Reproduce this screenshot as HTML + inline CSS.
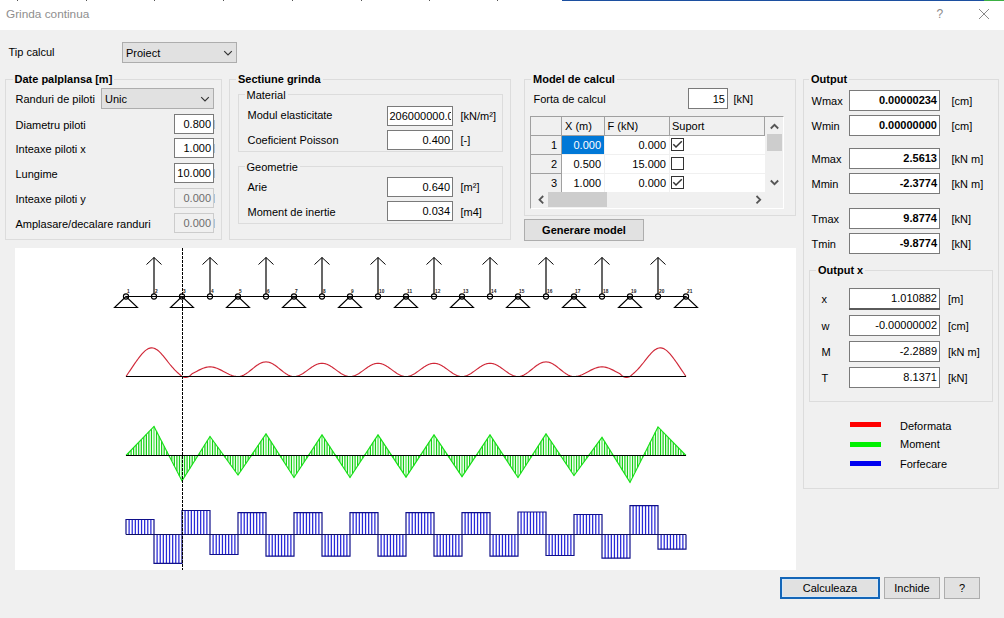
<!DOCTYPE html>
<html><head><meta charset="utf-8"><style>
html,body{margin:0;padding:0}
body{width:1004px;height:618px;position:relative;overflow:hidden;background:#f0f0f0;font-family:"Liberation Sans",sans-serif;font-size:11px;color:#000}
.t{position:absolute;white-space:nowrap;line-height:13px}
</style></head><body>
<div style="position:absolute;left:0px;top:0px;width:1004px;height:30px;box-sizing:border-box;background:#fff;"></div><div style="position:absolute;left:562px;top:0px;width:422px;height:1px;box-sizing:border-box;background:#1c4fa0;"></div><div style="position:absolute;left:17px;top:0px;width:1px;height:1px;box-sizing:border-box;background:#555;"></div><div style="position:absolute;left:86px;top:0px;width:1px;height:1px;box-sizing:border-box;background:#555;"></div><div style="position:absolute;left:154px;top:0px;width:1px;height:1px;box-sizing:border-box;background:#555;"></div><div style="position:absolute;left:223px;top:0px;width:1px;height:1px;box-sizing:border-box;background:#555;"></div><div style="position:absolute;left:292px;top:0px;width:1px;height:1px;box-sizing:border-box;background:#555;"></div><div style="position:absolute;left:361px;top:0px;width:1px;height:1px;box-sizing:border-box;background:#555;"></div><div style="position:absolute;left:429px;top:0px;width:1px;height:1px;box-sizing:border-box;background:#555;"></div><div style="position:absolute;left:497px;top:0px;width:1px;height:1px;box-sizing:border-box;background:#555;"></div><div style="position:absolute;left:984px;top:0px;width:20px;height:1px;box-sizing:border-box;background:#3cb043;"></div><div class="t" style="left:6px;top:8.27px;font-size:11.8px;color:#8e8e8e;">Grinda continua</div><div class="t" style="left:936.5px;top:8.09px;font-size:12px;color:#8a8a8a;">?</div><svg style="position:absolute;left:978px;top:8px" width="12" height="12"><path d="M1 1 L11 11 M11 1 L1 11" stroke="#8a8a8a" stroke-width="1" fill="none"/></svg><div class="t" style="left:8.5px;top:46.00px;font-size:11px;">Tip calcul</div><div style="position:absolute;left:122px;top:42px;width:115px;height:21px;box-sizing:border-box;border:1px solid #adadad;background:#e1e1e1;"></div><div class="t" style="left:126px;top:47.00px;font-size:11px;">Proiect</div><svg style="position:absolute;left:222px;top:48px" width="12" height="10"><path d="M2.2 3.2 L6 7 L9.8 3.2" fill="none" stroke="#333" stroke-width="1.15"/></svg><div style="position:absolute;left:5px;top:79px;width:217px;height:161px;box-sizing:border-box;border:1px solid #dcdcdc;"></div><div class="t" style="left:12.5px;top:73.00px;padding:0 2px;background:#f0f0f0;font-weight:bold;">Date palplansa [m]</div><div class="t" style="left:15.5px;top:93.00px;font-size:11px;">Randuri de piloti</div><div style="position:absolute;left:101px;top:88px;width:113px;height:21px;box-sizing:border-box;border:1px solid #adadad;background:#e1e1e1;"></div><div class="t" style="left:105px;top:93.00px;font-size:11px;">Unic</div><svg style="position:absolute;left:199px;top:94px" width="12" height="10"><path d="M2.2 3.2 L6 7 L9.8 3.2" fill="none" stroke="#333" stroke-width="1.15"/></svg><div class="t" style="left:15.5px;top:119.00px;font-size:11px;">Diametru piloti</div><div style="position:absolute;left:174px;top:114px;width:40px;height:20px;box-sizing:border-box;border:1px solid #7a7a7a;background:#fff;"></div><div class="t" style="right:793px;top:118.00px;font-size:11px;text-align:right;color:#000;">0.800</div><div style="position:absolute;left:214px;top:120px;width:1px;height:9px;box-sizing:border-box;background:#a8c4dc;"></div><div class="t" style="left:15.5px;top:143.00px;font-size:11px;">Inteaxe piloti x</div><div style="position:absolute;left:174px;top:138px;width:40px;height:20px;box-sizing:border-box;border:1px solid #7a7a7a;background:#fff;"></div><div class="t" style="right:793px;top:142.00px;font-size:11px;text-align:right;color:#000;">1.000</div><div style="position:absolute;left:214px;top:144px;width:1px;height:9px;box-sizing:border-box;background:#a8c4dc;"></div><div class="t" style="left:15.5px;top:168.00px;font-size:11px;">Lungime</div><div style="position:absolute;left:174px;top:163px;width:40px;height:20px;box-sizing:border-box;border:1px solid #7a7a7a;background:#fff;"></div><div class="t" style="right:793px;top:167.00px;font-size:11px;text-align:right;color:#000;">10.000</div><div style="position:absolute;left:214px;top:169px;width:1px;height:9px;box-sizing:border-box;background:#a8c4dc;"></div><div class="t" style="left:15.5px;top:193.00px;font-size:11px;">Inteaxe piloti y</div><div style="position:absolute;left:174px;top:188px;width:40px;height:20px;box-sizing:border-box;border:1px solid #cccccc;background:#f0f0f0;"></div><div class="t" style="right:793px;top:192.00px;font-size:11px;text-align:right;color:#6d6d6d;">0.000</div><div style="position:absolute;left:214px;top:194px;width:1px;height:9px;box-sizing:border-box;background:#a8c4dc;"></div><div class="t" style="left:15.5px;top:218.00px;font-size:11px;">Amplasare/decalare randuri</div><div style="position:absolute;left:174px;top:213px;width:40px;height:20px;box-sizing:border-box;border:1px solid #cccccc;background:#f0f0f0;"></div><div class="t" style="right:793px;top:217.00px;font-size:11px;text-align:right;color:#6d6d6d;">0.000</div><div style="position:absolute;left:214px;top:219px;width:1px;height:9px;box-sizing:border-box;background:#a8c4dc;"></div><div style="position:absolute;left:229px;top:79px;width:282px;height:161px;box-sizing:border-box;border:1px solid #dcdcdc;"></div><div class="t" style="left:236px;top:73.00px;padding:0 2px;background:#f0f0f0;font-weight:bold;">Sectiune grinda</div><div style="position:absolute;left:238px;top:94px;width:265px;height:58px;box-sizing:border-box;border:1px solid #dcdcdc;"></div><div class="t" style="left:244.5px;top:89.00px;padding:0 2px;background:#f0f0f0;">Material</div><div class="t" style="left:247.5px;top:109.00px;font-size:11px;">Modul elasticitate</div><div style="position:absolute;left:387px;top:106px;width:66px;height:20px;box-sizing:border-box;border:1px solid #7a7a7a;background:#fff;"></div><div style="position:absolute;left:388px;top:107px;width:63px;height:18px;overflow:hidden"><div class="t" style="left:1.5px;top:3px">206000000.0</div></div><div class="t" style="left:460.5px;top:110.00px;font-size:11px;">[kN/m&sup2;]</div><div class="t" style="left:247.5px;top:134.00px;font-size:11px;">Coeficient Poisson</div><div style="position:absolute;left:387px;top:130px;width:66px;height:20px;box-sizing:border-box;border:1px solid #7a7a7a;background:#fff;"></div><div class="t" style="right:554px;top:134.00px;font-size:11px;text-align:right;color:#000;">0.400</div><div class="t" style="left:460.5px;top:134.00px;font-size:11px;">[-]</div><div style="position:absolute;left:238px;top:166px;width:265px;height:58px;box-sizing:border-box;border:1px solid #dcdcdc;"></div><div class="t" style="left:244.5px;top:161.00px;padding:0 2px;background:#f0f0f0;">Geometrie</div><div class="t" style="left:247.5px;top:181.00px;font-size:11px;">Arie</div><div style="position:absolute;left:387px;top:177px;width:66px;height:20px;box-sizing:border-box;border:1px solid #7a7a7a;background:#fff;"></div><div class="t" style="right:554px;top:181.00px;font-size:11px;text-align:right;color:#000;">0.640</div><div class="t" style="left:460.5px;top:181.00px;font-size:11px;">[m&sup2;]</div><div class="t" style="left:247.5px;top:206.00px;font-size:11px;">Moment de inertie</div><div style="position:absolute;left:387px;top:201px;width:66px;height:20px;box-sizing:border-box;border:1px solid #7a7a7a;background:#fff;"></div><div class="t" style="right:554px;top:205.00px;font-size:11px;text-align:right;color:#000;">0.034</div><div class="t" style="left:460.5px;top:206.00px;font-size:11px;">[m4]</div><div style="position:absolute;left:524px;top:79px;width:272px;height:137px;box-sizing:border-box;border:1px solid #dcdcdc;"></div><div class="t" style="left:531px;top:73.00px;padding:0 2px;background:#f0f0f0;font-weight:bold;">Model de calcul</div><div class="t" style="left:533.5px;top:93.00px;font-size:11px;">Forta de calcul</div><div style="position:absolute;left:688px;top:88px;width:40px;height:21px;box-sizing:border-box;border:1px solid #7a7a7a;background:#fff;"></div><div class="t" style="right:279px;top:93.00px;font-size:11px;text-align:right;color:#000;">15</div><div class="t" style="left:733.5px;top:93.00px;font-size:11px;">[kN]</div><div style="position:absolute;left:530px;top:116px;width:254px;height:93px;box-sizing:border-box;background:#f0f0f0;border-left:1px solid #a0a0a0;border-top:1px solid #a0a0a0;border-right:1px solid #ffffff;border-bottom:1px solid #ffffff;"></div><div style="position:absolute;left:531px;top:117px;width:234px;height:19px;box-sizing:border-box;background:#f0f0f0;border-bottom:1px solid #a0a0a0;"></div><div style="position:absolute;left:531px;top:136px;width:31px;height:19px;box-sizing:border-box;background:#f0f0f0;border-bottom:1px solid #a0a0a0;"></div><div style="position:absolute;left:531px;top:155px;width:31px;height:19px;box-sizing:border-box;background:#f0f0f0;border-bottom:1px solid #a0a0a0;"></div><div style="position:absolute;left:531px;top:174px;width:31px;height:18px;box-sizing:border-box;background:#f0f0f0;"></div><div style="position:absolute;left:561px;top:117px;width:1px;height:75px;box-sizing:border-box;background:#a0a0a0;"></div><div style="position:absolute;left:562px;top:136px;width:203px;height:56px;box-sizing:border-box;background:#ffffff;"></div><div style="position:absolute;left:562px;top:154px;width:203px;height:1px;box-sizing:border-box;background:#f0f0f0;"></div><div style="position:absolute;left:562px;top:173px;width:203px;height:1px;box-sizing:border-box;background:#f0f0f0;"></div><div style="position:absolute;left:604px;top:136px;width:1px;height:56px;box-sizing:border-box;background:#f0f0f0;"></div><div style="position:absolute;left:669px;top:136px;width:1px;height:56px;box-sizing:border-box;background:#f0f0f0;"></div><div style="position:absolute;left:604px;top:117px;width:1px;height:19px;box-sizing:border-box;background:#a0a0a0;"></div><div style="position:absolute;left:669px;top:117px;width:1px;height:19px;box-sizing:border-box;background:#a0a0a0;"></div><div style="position:absolute;left:764px;top:117px;width:1px;height:19px;box-sizing:border-box;background:#a0a0a0;"></div><div style="position:absolute;left:562px;top:136px;width:42px;height:18px;box-sizing:border-box;background:#0078d7;"></div><div class="t" style="left:565px;top:120.00px;font-size:11px;">X (m)</div><div class="t" style="left:607.5px;top:120.00px;font-size:11px;">F (kN)</div><div class="t" style="left:672px;top:120.00px;font-size:11px;">Suport</div><div class="t" style="right:447px;top:139.00px;font-size:11px;text-align:right;">1</div><div class="t" style="right:403px;top:139.00px;font-size:11px;text-align:right;color:#fff;">0.000</div><div class="t" style="right:338px;top:139.00px;font-size:11px;text-align:right;">0.000</div><svg style="position:absolute;left:671px;top:138px" width="13" height="13"><rect x="0.5" y="0.5" width="12" height="12" fill="#fff" stroke="#333"/><path d="M2.3 6.3 L5 9 L10.8 3.2" fill="none" stroke="#333" stroke-width="1.5"/></svg><div class="t" style="right:447px;top:158.00px;font-size:11px;text-align:right;">2</div><div class="t" style="right:403px;top:158.00px;font-size:11px;text-align:right;">0.500</div><div class="t" style="right:338px;top:158.00px;font-size:11px;text-align:right;">15.000</div><svg style="position:absolute;left:671px;top:157px" width="13" height="13"><rect x="0.5" y="0.5" width="12" height="12" fill="#fff" stroke="#333"/></svg><div class="t" style="right:447px;top:177.00px;font-size:11px;text-align:right;">3</div><div class="t" style="right:403px;top:177.00px;font-size:11px;text-align:right;">1.000</div><div class="t" style="right:338px;top:177.00px;font-size:11px;text-align:right;">0.000</div><svg style="position:absolute;left:671px;top:176px" width="13" height="13"><rect x="0.5" y="0.5" width="12" height="12" fill="#fff" stroke="#333"/><path d="M2.3 6.3 L5 9 L10.8 3.2" fill="none" stroke="#333" stroke-width="1.5"/></svg><div style="position:absolute;left:767px;top:134px;width:15px;height:17px;box-sizing:border-box;background:#cdcdcd;"></div><svg style="position:absolute;left:765px;top:117px" width="18" height="75"><path d="M5.8 11.5 L9.5 7.8 L13.2 11.5" fill="none" stroke="#555" stroke-width="1.8"/><path d="M5.8 63.5 L9.5 67.2 L13.2 63.5" fill="none" stroke="#555" stroke-width="1.8"/></svg><div style="position:absolute;left:548px;top:192px;width:59px;height:15px;box-sizing:border-box;background:#cdcdcd;"></div><svg style="position:absolute;left:531px;top:192px" width="234" height="16"><path d="M12.2 4 L8.5 7.7 L12.2 11.4" fill="none" stroke="#555" stroke-width="1.8"/><path d="M225.5 4 L229.2 7.7 L225.5 11.4" fill="none" stroke="#555" stroke-width="1.8"/></svg><div style="position:absolute;left:803px;top:79px;width:196px;height:410px;box-sizing:border-box;border:1px solid #dcdcdc;"></div><div class="t" style="left:809px;top:73.00px;padding:0 2px;background:#f0f0f0;font-weight:bold;">Output</div><div class="t" style="left:811.5px;top:95.00px;font-size:11px;">Wmax</div><div style="position:absolute;left:849px;top:90px;width:91px;height:21px;box-sizing:border-box;border:1px solid #7a7a7a;background:#fff;"></div><div class="t" style="right:67px;top:94.00px;font-size:11px;text-align:right;color:#000;font-weight:bold;">0.00000234</div><div class="t" style="left:951.5px;top:95.00px;font-size:11px;">[cm]</div><div class="t" style="left:811.5px;top:120.00px;font-size:11px;">Wmin</div><div style="position:absolute;left:849px;top:115px;width:91px;height:21px;box-sizing:border-box;border:1px solid #7a7a7a;background:#fff;"></div><div class="t" style="right:67px;top:119.00px;font-size:11px;text-align:right;color:#000;font-weight:bold;">0.00000000</div><div class="t" style="left:951.5px;top:120.00px;font-size:11px;">[cm]</div><div class="t" style="left:811.5px;top:153.00px;font-size:11px;">Mmax</div><div style="position:absolute;left:849px;top:148px;width:91px;height:21px;box-sizing:border-box;border:1px solid #7a7a7a;background:#fff;"></div><div class="t" style="right:67px;top:152.00px;font-size:11px;text-align:right;color:#000;font-weight:bold;">2.5613</div><div class="t" style="left:951.5px;top:153.00px;font-size:11px;">[kN m]</div><div class="t" style="left:811.5px;top:178.00px;font-size:11px;">Mmin</div><div style="position:absolute;left:849px;top:173px;width:91px;height:21px;box-sizing:border-box;border:1px solid #7a7a7a;background:#fff;"></div><div class="t" style="right:67px;top:177.00px;font-size:11px;text-align:right;color:#000;font-weight:bold;">-2.3774</div><div class="t" style="left:951.5px;top:178.00px;font-size:11px;">[kN m]</div><div class="t" style="left:811.5px;top:213.00px;font-size:11px;">Tmax</div><div style="position:absolute;left:849px;top:208px;width:91px;height:21px;box-sizing:border-box;border:1px solid #7a7a7a;background:#fff;"></div><div class="t" style="right:67px;top:212.00px;font-size:11px;text-align:right;color:#000;font-weight:bold;">9.8774</div><div class="t" style="left:951.5px;top:213.00px;font-size:11px;">[kN]</div><div class="t" style="left:811.5px;top:238.00px;font-size:11px;">Tmin</div><div style="position:absolute;left:849px;top:233px;width:91px;height:21px;box-sizing:border-box;border:1px solid #7a7a7a;background:#fff;"></div><div class="t" style="right:67px;top:237.00px;font-size:11px;text-align:right;color:#000;font-weight:bold;">-9.8774</div><div class="t" style="left:951.5px;top:238.00px;font-size:11px;">[kN]</div><div style="position:absolute;left:809px;top:270px;width:184px;height:132px;box-sizing:border-box;border:1px solid #dcdcdc;"></div><div class="t" style="left:816px;top:264.00px;padding:0 2px;background:#f0f0f0;font-weight:bold;">Output x</div><div class="t" style="left:821.5px;top:293.00px;font-size:11px;">x</div><div style="position:absolute;left:849px;top:288px;width:91px;height:21px;box-sizing:border-box;border:1px solid #7a7a7a;background:#fff;"></div><div class="t" style="right:67px;top:292.00px;font-size:11px;text-align:right;color:#000;">1.010882</div><div style="position:absolute;left:849px;top:308px;width:91px;height:2px;box-sizing:border-box;background:#5a5a5a;"></div><div class="t" style="left:948px;top:293.00px;font-size:11px;">[m]</div><div class="t" style="left:821.5px;top:320.00px;font-size:11px;">w</div><div style="position:absolute;left:849px;top:315px;width:91px;height:21px;box-sizing:border-box;border:1px solid #7a7a7a;background:#fff;"></div><div class="t" style="right:67px;top:319.00px;font-size:11px;text-align:right;color:#000;">-0.00000002</div><div class="t" style="left:948px;top:320.00px;font-size:11px;">[cm]</div><div class="t" style="left:821.5px;top:346.00px;font-size:11px;">M</div><div style="position:absolute;left:849px;top:341px;width:91px;height:21px;box-sizing:border-box;border:1px solid #7a7a7a;background:#fff;"></div><div class="t" style="right:67px;top:345.00px;font-size:11px;text-align:right;color:#000;">-2.2889</div><div class="t" style="left:948px;top:346.00px;font-size:11px;">[kN m]</div><div class="t" style="left:821.5px;top:372.00px;font-size:11px;">T</div><div style="position:absolute;left:849px;top:367px;width:91px;height:21px;box-sizing:border-box;border:1px solid #7a7a7a;background:#fff;"></div><div class="t" style="right:67px;top:371.00px;font-size:11px;text-align:right;color:#000;">8.1371</div><div class="t" style="left:948px;top:372.00px;font-size:11px;">[kN]</div><div style="position:absolute;left:850px;top:422px;width:31px;height:5px;box-sizing:border-box;background:#ff0000;"></div><div class="t" style="left:900px;top:420.00px;font-size:11px;">Deformata</div><div style="position:absolute;left:850px;top:442px;width:31px;height:5px;box-sizing:border-box;background:#00f000;"></div><div class="t" style="left:900px;top:438.00px;font-size:11px;">Moment</div><div style="position:absolute;left:850px;top:461px;width:31px;height:5px;box-sizing:border-box;background:#0000f0;"></div><div class="t" style="left:900px;top:458.00px;font-size:11px;">Forfecare</div><div style="position:absolute;left:524px;top:219px;width:120px;height:22px;box-sizing:border-box;border:1px solid #adadad;background:#e1e1e1;"></div><div class="t" style="left:484.0px;width:200px;top:224.00px;font-size:11px;text-align:center;font-weight:bold;">Generare model</div><div style="position:absolute;left:780px;top:577px;width:100px;height:22px;box-sizing:border-box;border:2px solid #1466b8;background:#e1e1e1;box-shadow:inset 0 0 0 1px #d6e8f8;"></div><div class="t" style="left:730.0px;width:200px;top:582.00px;font-size:11px;text-align:center;">Calculeaza</div><div style="position:absolute;left:884px;top:577px;width:56px;height:22px;box-sizing:border-box;border:1px solid #adadad;background:#e1e1e1;"></div><div class="t" style="left:812.0px;width:200px;top:582.00px;font-size:11px;text-align:center;">Inchide</div><div style="position:absolute;left:944px;top:577px;width:36px;height:22px;box-sizing:border-box;border:1px solid #adadad;background:#e1e1e1;"></div><div class="t" style="left:862.0px;width:200px;top:582.00px;font-size:11px;text-align:center;">?</div><div style="position:absolute;left:15px;top:248px;width:781px;height:322px;box-sizing:border-box;background:#fff;"></div><svg style="position:absolute;left:15px;top:248px" width="781" height="322" viewBox="15 248 781 322"><path d="M126 296.5 H686" stroke="#000" stroke-width="1" fill="none"/><path d="M126 296.5 L114.5 307.5 H137.5 Z" stroke="#000" stroke-width="1.1" fill="none"/><path d="M154 294 V257.5" stroke="#000" stroke-width="1.2" fill="none"/><path d="M146.5 264.5 L154 257.5 L161.5 264.5" stroke="#000" stroke-width="1" fill="none"/><path d="M182 296.5 L170.5 307.5 H193.5 Z" stroke="#000" stroke-width="1.1" fill="none"/><path d="M210 294 V257.5" stroke="#000" stroke-width="1.2" fill="none"/><path d="M202.5 264.5 L210 257.5 L217.5 264.5" stroke="#000" stroke-width="1" fill="none"/><path d="M238 296.5 L226.5 307.5 H249.5 Z" stroke="#000" stroke-width="1.1" fill="none"/><path d="M266 294 V257.5" stroke="#000" stroke-width="1.2" fill="none"/><path d="M258.5 264.5 L266 257.5 L273.5 264.5" stroke="#000" stroke-width="1" fill="none"/><path d="M294 296.5 L282.5 307.5 H305.5 Z" stroke="#000" stroke-width="1.1" fill="none"/><path d="M322 294 V257.5" stroke="#000" stroke-width="1.2" fill="none"/><path d="M314.5 264.5 L322 257.5 L329.5 264.5" stroke="#000" stroke-width="1" fill="none"/><path d="M350 296.5 L338.5 307.5 H361.5 Z" stroke="#000" stroke-width="1.1" fill="none"/><path d="M378 294 V257.5" stroke="#000" stroke-width="1.2" fill="none"/><path d="M370.5 264.5 L378 257.5 L385.5 264.5" stroke="#000" stroke-width="1" fill="none"/><path d="M406 296.5 L394.5 307.5 H417.5 Z" stroke="#000" stroke-width="1.1" fill="none"/><path d="M434 294 V257.5" stroke="#000" stroke-width="1.2" fill="none"/><path d="M426.5 264.5 L434 257.5 L441.5 264.5" stroke="#000" stroke-width="1" fill="none"/><path d="M462 296.5 L450.5 307.5 H473.5 Z" stroke="#000" stroke-width="1.1" fill="none"/><path d="M490 294 V257.5" stroke="#000" stroke-width="1.2" fill="none"/><path d="M482.5 264.5 L490 257.5 L497.5 264.5" stroke="#000" stroke-width="1" fill="none"/><path d="M518 296.5 L506.5 307.5 H529.5 Z" stroke="#000" stroke-width="1.1" fill="none"/><path d="M546 294 V257.5" stroke="#000" stroke-width="1.2" fill="none"/><path d="M538.5 264.5 L546 257.5 L553.5 264.5" stroke="#000" stroke-width="1" fill="none"/><path d="M574 296.5 L562.5 307.5 H585.5 Z" stroke="#000" stroke-width="1.1" fill="none"/><path d="M602 294 V257.5" stroke="#000" stroke-width="1.2" fill="none"/><path d="M594.5 264.5 L602 257.5 L609.5 264.5" stroke="#000" stroke-width="1" fill="none"/><path d="M630 296.5 L618.5 307.5 H641.5 Z" stroke="#000" stroke-width="1.1" fill="none"/><path d="M658 294 V257.5" stroke="#000" stroke-width="1.2" fill="none"/><path d="M650.5 264.5 L658 257.5 L665.5 264.5" stroke="#000" stroke-width="1" fill="none"/><path d="M686 296.5 L674.5 307.5 H697.5 Z" stroke="#000" stroke-width="1.1" fill="none"/><circle cx="126" cy="296.5" r="2.6" stroke="#000" stroke-width="1.1" fill="none"/><text x="127" y="293" font-size="4.8" font-weight="bold" font-family="Liberation Sans" fill="#222">1</text><circle cx="154" cy="296.5" r="2.6" stroke="#000" stroke-width="1.1" fill="none"/><text x="155" y="293" font-size="4.8" font-weight="bold" font-family="Liberation Sans" fill="#222">2</text><circle cx="182" cy="296.5" r="2.6" stroke="#000" stroke-width="1.1" fill="none"/><text x="183" y="293" font-size="4.8" font-weight="bold" font-family="Liberation Sans" fill="#222">3</text><circle cx="210" cy="296.5" r="2.6" stroke="#000" stroke-width="1.1" fill="none"/><text x="211" y="293" font-size="4.8" font-weight="bold" font-family="Liberation Sans" fill="#222">4</text><circle cx="238" cy="296.5" r="2.6" stroke="#000" stroke-width="1.1" fill="none"/><text x="239" y="293" font-size="4.8" font-weight="bold" font-family="Liberation Sans" fill="#222">5</text><circle cx="266" cy="296.5" r="2.6" stroke="#000" stroke-width="1.1" fill="none"/><text x="267" y="293" font-size="4.8" font-weight="bold" font-family="Liberation Sans" fill="#222">6</text><circle cx="294" cy="296.5" r="2.6" stroke="#000" stroke-width="1.1" fill="none"/><text x="295" y="293" font-size="4.8" font-weight="bold" font-family="Liberation Sans" fill="#222">7</text><circle cx="322" cy="296.5" r="2.6" stroke="#000" stroke-width="1.1" fill="none"/><text x="323" y="293" font-size="4.8" font-weight="bold" font-family="Liberation Sans" fill="#222">8</text><circle cx="350" cy="296.5" r="2.6" stroke="#000" stroke-width="1.1" fill="none"/><text x="351" y="293" font-size="4.8" font-weight="bold" font-family="Liberation Sans" fill="#222">9</text><circle cx="378" cy="296.5" r="2.6" stroke="#000" stroke-width="1.1" fill="none"/><text x="379" y="293" font-size="4.8" font-weight="bold" font-family="Liberation Sans" fill="#222">10</text><circle cx="406" cy="296.5" r="2.6" stroke="#000" stroke-width="1.1" fill="none"/><text x="407" y="293" font-size="4.8" font-weight="bold" font-family="Liberation Sans" fill="#222">11</text><circle cx="434" cy="296.5" r="2.6" stroke="#000" stroke-width="1.1" fill="none"/><text x="435" y="293" font-size="4.8" font-weight="bold" font-family="Liberation Sans" fill="#222">12</text><circle cx="462" cy="296.5" r="2.6" stroke="#000" stroke-width="1.1" fill="none"/><text x="463" y="293" font-size="4.8" font-weight="bold" font-family="Liberation Sans" fill="#222">13</text><circle cx="490" cy="296.5" r="2.6" stroke="#000" stroke-width="1.1" fill="none"/><text x="491" y="293" font-size="4.8" font-weight="bold" font-family="Liberation Sans" fill="#222">14</text><circle cx="518" cy="296.5" r="2.6" stroke="#000" stroke-width="1.1" fill="none"/><text x="519" y="293" font-size="4.8" font-weight="bold" font-family="Liberation Sans" fill="#222">15</text><circle cx="546" cy="296.5" r="2.6" stroke="#000" stroke-width="1.1" fill="none"/><text x="547" y="293" font-size="4.8" font-weight="bold" font-family="Liberation Sans" fill="#222">16</text><circle cx="574" cy="296.5" r="2.6" stroke="#000" stroke-width="1.1" fill="none"/><text x="575" y="293" font-size="4.8" font-weight="bold" font-family="Liberation Sans" fill="#222">17</text><circle cx="602" cy="296.5" r="2.6" stroke="#000" stroke-width="1.1" fill="none"/><text x="603" y="293" font-size="4.8" font-weight="bold" font-family="Liberation Sans" fill="#222">18</text><circle cx="630" cy="296.5" r="2.6" stroke="#000" stroke-width="1.1" fill="none"/><text x="631" y="293" font-size="4.8" font-weight="bold" font-family="Liberation Sans" fill="#222">19</text><circle cx="658" cy="296.5" r="2.6" stroke="#000" stroke-width="1.1" fill="none"/><text x="659" y="293" font-size="4.8" font-weight="bold" font-family="Liberation Sans" fill="#222">20</text><circle cx="686" cy="296.5" r="2.6" stroke="#000" stroke-width="1.1" fill="none"/><text x="687" y="293" font-size="4.8" font-weight="bold" font-family="Liberation Sans" fill="#222">21</text><path d="M126.00 376.50 L127.00 375.02 L128.00 373.53 L129.00 372.05 L130.00 370.56 L131.00 369.08 L132.00 367.60 L133.00 366.12 L134.00 364.65 L135.00 363.20 L136.00 361.76 L137.00 360.35 L138.00 358.97 L139.00 357.62 L140.00 356.33 L141.00 355.09 L142.00 353.92 L143.00 352.82 L144.00 351.81 L145.00 350.90 L146.00 350.10 L147.00 349.40 L148.00 348.83 L149.00 348.39 L150.00 348.09 L151.00 347.92 L152.00 347.89 L153.00 348.00 L154.00 348.25 L155.00 348.63 L156.00 349.15 L157.00 349.79 L158.00 350.54 L159.00 351.41 L160.00 352.36 L161.00 353.41 L162.00 354.52 L163.00 355.70 L164.00 356.92 L165.00 358.17 L166.00 359.44 L167.00 360.72 L168.00 361.99 L169.00 363.25 L170.00 364.49 L171.00 365.69 L172.00 366.86 L173.00 367.99 L174.00 369.08 L175.00 370.13 L176.00 371.13 L177.00 372.09 L178.00 373.02 L179.00 373.92 L180.00 374.79 L181.00 375.65 L182.00 376.50 L183.00 376.93 L184.00 377.26 L185.00 377.44 L186.00 377.45 L187.00 377.26 L188.00 376.89 L189.00 376.32 L190.00 375.60 L191.00 374.75 L192.00 373.82 L193.00 373.29 L194.00 372.77 L195.00 372.24 L196.00 371.70 L197.00 371.16 L198.00 370.63 L199.00 370.11 L200.00 369.62 L201.00 369.15 L202.00 368.71 L203.00 368.31 L204.00 367.95 L205.00 367.64 L206.00 367.38 L207.00 367.17 L208.00 367.02 L209.00 366.93 L210.00 366.90 L211.00 366.93 L212.00 367.02 L213.00 367.17 L214.00 367.38 L215.00 367.64 L216.00 367.95 L217.00 368.31 L218.00 368.71 L219.00 369.15 L220.00 369.62 L221.00 370.11 L222.00 370.63 L223.00 371.16 L224.00 371.70 L225.00 372.24 L226.00 372.77 L227.00 373.29 L228.00 373.78 L229.00 374.25 L230.00 374.69 L231.00 375.09 L232.00 375.45 L233.00 375.76 L234.00 376.02 L235.00 376.23 L236.00 376.38 L237.00 376.47 L238.00 376.50 L239.00 376.45 L240.00 376.32 L241.00 376.09 L242.00 375.78 L243.00 375.38 L244.00 374.91 L245.00 374.36 L246.00 373.75 L247.00 373.08 L248.00 372.37 L249.00 371.61 L250.00 370.82 L251.00 370.02 L252.00 369.20 L253.00 368.38 L254.00 367.58 L255.00 366.79 L256.00 366.03 L257.00 365.32 L258.00 364.65 L259.00 364.04 L260.00 363.49 L261.00 363.02 L262.00 362.62 L263.00 362.31 L264.00 362.08 L265.00 361.95 L266.00 361.90 L267.00 361.95 L268.00 362.08 L269.00 362.31 L270.00 362.62 L271.00 363.02 L272.00 363.49 L273.00 364.04 L274.00 364.65 L275.00 365.32 L276.00 366.03 L277.00 366.79 L278.00 367.58 L279.00 368.38 L280.00 369.20 L281.00 370.02 L282.00 370.82 L283.00 371.61 L284.00 372.37 L285.00 373.08 L286.00 373.75 L287.00 374.36 L288.00 374.91 L289.00 375.38 L290.00 375.78 L291.00 376.09 L292.00 376.32 L293.00 376.45 L294.00 376.50 L295.00 376.46 L296.00 376.33 L297.00 376.13 L298.00 375.85 L299.00 375.49 L300.00 375.06 L301.00 374.57 L302.00 374.02 L303.00 373.41 L304.00 372.76 L305.00 372.08 L306.00 371.37 L307.00 370.64 L308.00 369.90 L309.00 369.16 L310.00 368.43 L311.00 367.72 L312.00 367.04 L313.00 366.39 L314.00 365.78 L315.00 365.23 L316.00 364.74 L317.00 364.31 L318.00 363.95 L319.00 363.67 L320.00 363.47 L321.00 363.34 L322.00 363.30 L323.00 363.34 L324.00 363.47 L325.00 363.67 L326.00 363.95 L327.00 364.31 L328.00 364.74 L329.00 365.23 L330.00 365.78 L331.00 366.39 L332.00 367.04 L333.00 367.72 L334.00 368.43 L335.00 369.16 L336.00 369.90 L337.00 370.64 L338.00 371.37 L339.00 372.08 L340.00 372.76 L341.00 373.41 L342.00 374.02 L343.00 374.57 L344.00 375.06 L345.00 375.49 L346.00 375.85 L347.00 376.13 L348.00 376.33 L349.00 376.46 L350.00 376.50 L351.00 376.46 L352.00 376.33 L353.00 376.13 L354.00 375.85 L355.00 375.49 L356.00 375.06 L357.00 374.57 L358.00 374.02 L359.00 373.41 L360.00 372.76 L361.00 372.08 L362.00 371.37 L363.00 370.64 L364.00 369.90 L365.00 369.16 L366.00 368.43 L367.00 367.72 L368.00 367.04 L369.00 366.39 L370.00 365.78 L371.00 365.23 L372.00 364.74 L373.00 364.31 L374.00 363.95 L375.00 363.67 L376.00 363.47 L377.00 363.34 L378.00 363.30 L379.00 363.34 L380.00 363.47 L381.00 363.67 L382.00 363.95 L383.00 364.31 L384.00 364.74 L385.00 365.23 L386.00 365.78 L387.00 366.39 L388.00 367.04 L389.00 367.72 L390.00 368.43 L391.00 369.16 L392.00 369.90 L393.00 370.64 L394.00 371.37 L395.00 372.08 L396.00 372.76 L397.00 373.41 L398.00 374.02 L399.00 374.57 L400.00 375.06 L401.00 375.49 L402.00 375.85 L403.00 376.13 L404.00 376.33 L405.00 376.46 L406.00 376.50 L407.00 376.46 L408.00 376.33 L409.00 376.13 L410.00 375.85 L411.00 375.49 L412.00 375.06 L413.00 374.57 L414.00 374.02 L415.00 373.41 L416.00 372.76 L417.00 372.08 L418.00 371.37 L419.00 370.64 L420.00 369.90 L421.00 369.16 L422.00 368.43 L423.00 367.72 L424.00 367.04 L425.00 366.39 L426.00 365.78 L427.00 365.23 L428.00 364.74 L429.00 364.31 L430.00 363.95 L431.00 363.67 L432.00 363.47 L433.00 363.34 L434.00 363.30 L435.00 363.34 L436.00 363.47 L437.00 363.67 L438.00 363.95 L439.00 364.31 L440.00 364.74 L441.00 365.23 L442.00 365.78 L443.00 366.39 L444.00 367.04 L445.00 367.72 L446.00 368.43 L447.00 369.16 L448.00 369.90 L449.00 370.64 L450.00 371.37 L451.00 372.08 L452.00 372.76 L453.00 373.41 L454.00 374.02 L455.00 374.57 L456.00 375.06 L457.00 375.49 L458.00 375.85 L459.00 376.13 L460.00 376.33 L461.00 376.46 L462.00 376.50 L463.00 376.46 L464.00 376.33 L465.00 376.13 L466.00 375.85 L467.00 375.49 L468.00 375.06 L469.00 374.57 L470.00 374.02 L471.00 373.41 L472.00 372.76 L473.00 372.08 L474.00 371.37 L475.00 370.64 L476.00 369.90 L477.00 369.16 L478.00 368.43 L479.00 367.72 L480.00 367.04 L481.00 366.39 L482.00 365.78 L483.00 365.23 L484.00 364.74 L485.00 364.31 L486.00 363.95 L487.00 363.67 L488.00 363.47 L489.00 363.34 L490.00 363.30 L491.00 363.34 L492.00 363.47 L493.00 363.67 L494.00 363.95 L495.00 364.31 L496.00 364.74 L497.00 365.23 L498.00 365.78 L499.00 366.39 L500.00 367.04 L501.00 367.72 L502.00 368.43 L503.00 369.16 L504.00 369.90 L505.00 370.64 L506.00 371.37 L507.00 372.08 L508.00 372.76 L509.00 373.41 L510.00 374.02 L511.00 374.57 L512.00 375.06 L513.00 375.49 L514.00 375.85 L515.00 376.13 L516.00 376.33 L517.00 376.46 L518.00 376.50 L519.00 376.45 L520.00 376.32 L521.00 376.09 L522.00 375.78 L523.00 375.38 L524.00 374.91 L525.00 374.36 L526.00 373.75 L527.00 373.08 L528.00 372.37 L529.00 371.61 L530.00 370.82 L531.00 370.02 L532.00 369.20 L533.00 368.38 L534.00 367.58 L535.00 366.79 L536.00 366.03 L537.00 365.32 L538.00 364.65 L539.00 364.04 L540.00 363.49 L541.00 363.02 L542.00 362.62 L543.00 362.31 L544.00 362.08 L545.00 361.95 L546.00 361.90 L547.00 361.95 L548.00 362.08 L549.00 362.31 L550.00 362.62 L551.00 363.02 L552.00 363.49 L553.00 364.04 L554.00 364.65 L555.00 365.32 L556.00 366.03 L557.00 366.79 L558.00 367.58 L559.00 368.38 L560.00 369.20 L561.00 370.02 L562.00 370.82 L563.00 371.61 L564.00 372.37 L565.00 373.08 L566.00 373.75 L567.00 374.36 L568.00 374.91 L569.00 375.38 L570.00 375.78 L571.00 376.09 L572.00 376.32 L573.00 376.45 L574.00 376.50 L575.00 376.47 L576.00 376.38 L577.00 376.23 L578.00 376.02 L579.00 375.76 L580.00 375.45 L581.00 375.09 L582.00 374.69 L583.00 374.25 L584.00 373.78 L585.00 373.29 L586.00 372.77 L587.00 372.24 L588.00 371.70 L589.00 371.16 L590.00 370.63 L591.00 370.11 L592.00 369.62 L593.00 369.15 L594.00 368.71 L595.00 368.31 L596.00 367.95 L597.00 367.64 L598.00 367.38 L599.00 367.17 L600.00 367.02 L601.00 366.93 L602.00 366.90 L603.00 366.93 L604.00 367.02 L605.00 367.17 L606.00 367.38 L607.00 367.64 L608.00 367.95 L609.00 368.31 L610.00 368.71 L611.00 369.15 L612.00 369.62 L613.00 370.11 L614.00 370.63 L615.00 371.16 L616.00 371.70 L617.00 372.24 L618.00 372.77 L619.00 373.29 L620.00 373.82 L621.00 374.75 L622.00 375.60 L623.00 376.32 L624.00 376.89 L625.00 377.26 L626.00 377.45 L627.00 377.44 L628.00 377.26 L629.00 376.93 L630.00 376.50 L631.00 375.65 L632.00 374.79 L633.00 373.92 L634.00 373.02 L635.00 372.09 L636.00 371.13 L637.00 370.13 L638.00 369.08 L639.00 367.99 L640.00 366.86 L641.00 365.69 L642.00 364.49 L643.00 363.25 L644.00 361.99 L645.00 360.72 L646.00 359.44 L647.00 358.17 L648.00 356.92 L649.00 355.70 L650.00 354.52 L651.00 353.41 L652.00 352.36 L653.00 351.41 L654.00 350.54 L655.00 349.79 L656.00 349.15 L657.00 348.63 L658.00 348.25 L659.00 348.00 L660.00 347.89 L661.00 347.92 L662.00 348.09 L663.00 348.39 L664.00 348.83 L665.00 349.40 L666.00 350.10 L667.00 350.90 L668.00 351.81 L669.00 352.82 L670.00 353.92 L671.00 355.09 L672.00 356.33 L673.00 357.62 L674.00 358.97 L675.00 360.35 L676.00 361.76 L677.00 363.20 L678.00 364.65 L679.00 366.12 L680.00 367.60 L681.00 369.08 L682.00 370.56 L683.00 372.05 L684.00 373.53 L685.00 375.02 L686.00 376.50" stroke="#d02838" stroke-width="1.15" fill="none" stroke-linejoin="round"/><path d="M126 376.5 H686" stroke="#000" stroke-width="1.1" fill="none"/><path d="M128.55 455.5 V452.85 M131.09 455.5 V450.21 M133.64 455.5 V447.56 M136.18 455.5 V444.92 M138.73 455.5 V442.27 M141.27 455.5 V439.63 M143.82 455.5 V436.98 M146.36 455.5 V434.34 M148.91 455.5 V431.69 M151.45 455.5 V429.05 M156.55 455.5 V431.35 M159.09 455.5 V436.31 M161.64 455.5 V441.26 M164.18 455.5 V446.22 M166.73 455.5 V451.17 M169.27 455.5 V456.13 M171.82 455.5 V461.08 M174.36 455.5 V466.04 M176.91 455.5 V470.99 M179.45 455.5 V475.95 M184.55 455.5 V476.86 M187.09 455.5 V472.83 M189.64 455.5 V468.79 M192.18 455.5 V464.75 M194.73 455.5 V460.72 M197.27 455.5 V456.68 M199.82 455.5 V452.65 M202.36 455.5 V448.61 M204.91 455.5 V444.57 M207.45 455.5 V440.54 M212.55 455.5 V440.00 M215.09 455.5 V443.50 M217.64 455.5 V447.00 M220.18 455.5 V450.50 M222.73 455.5 V454.00 M225.27 455.5 V457.50 M227.82 455.5 V461.00 M230.36 455.5 V464.50 M232.91 455.5 V468.00 M235.45 455.5 V471.50 M240.55 455.5 V471.26 M243.09 455.5 V467.53 M245.64 455.5 V463.79 M248.18 455.5 V460.05 M250.73 455.5 V456.32 M253.27 455.5 V452.58 M255.82 455.5 V448.85 M258.36 455.5 V445.11 M260.91 455.5 V441.37 M263.45 455.5 V437.64 M268.55 455.5 V437.86 M271.09 455.5 V441.83 M273.64 455.5 V445.79 M276.18 455.5 V449.75 M278.73 455.5 V453.72 M281.27 455.5 V457.68 M283.82 455.5 V461.65 M286.36 455.5 V465.61 M288.91 455.5 V469.57 M291.45 455.5 V473.54 M296.55 455.5 V473.63 M299.09 455.5 V469.75 M301.64 455.5 V465.88 M304.18 455.5 V462.01 M306.73 455.5 V458.14 M309.27 455.5 V454.26 M311.82 455.5 V450.39 M314.36 455.5 V446.52 M316.91 455.5 V442.65 M319.45 455.5 V438.77 M324.55 455.5 V438.77 M327.09 455.5 V442.65 M329.64 455.5 V446.52 M332.18 455.5 V450.39 M334.73 455.5 V454.26 M337.27 455.5 V458.14 M339.82 455.5 V462.01 M342.36 455.5 V465.88 M344.91 455.5 V469.75 M347.45 455.5 V473.63 M352.55 455.5 V473.63 M355.09 455.5 V469.75 M357.64 455.5 V465.88 M360.18 455.5 V462.01 M362.73 455.5 V458.14 M365.27 455.5 V454.26 M367.82 455.5 V450.39 M370.36 455.5 V446.52 M372.91 455.5 V442.65 M375.45 455.5 V438.77 M380.55 455.5 V438.75 M383.09 455.5 V442.59 M385.64 455.5 V446.44 M388.18 455.5 V450.28 M390.73 455.5 V454.13 M393.27 455.5 V457.97 M395.82 455.5 V461.82 M398.36 455.5 V465.66 M400.91 455.5 V469.51 M403.45 455.5 V473.35 M408.55 455.5 V473.35 M411.09 455.5 V469.51 M413.64 455.5 V465.66 M416.18 455.5 V461.82 M418.73 455.5 V457.97 M421.27 455.5 V454.13 M423.82 455.5 V450.28 M426.36 455.5 V446.44 M428.91 455.5 V442.59 M431.45 455.5 V438.75 M436.55 455.5 V438.70 M439.09 455.5 V442.50 M441.64 455.5 V446.30 M444.18 455.5 V450.10 M446.73 455.5 V453.90 M449.27 455.5 V457.70 M451.82 455.5 V461.50 M454.36 455.5 V465.30 M456.91 455.5 V469.10 M459.45 455.5 V472.90 M464.55 455.5 V472.90 M467.09 455.5 V469.10 M469.64 455.5 V465.30 M472.18 455.5 V461.50 M474.73 455.5 V457.70 M477.27 455.5 V453.90 M479.82 455.5 V450.10 M482.36 455.5 V446.30 M484.91 455.5 V442.50 M487.45 455.5 V438.70 M492.55 455.5 V438.77 M495.09 455.5 V442.65 M497.64 455.5 V446.52 M500.18 455.5 V450.39 M502.73 455.5 V454.26 M505.27 455.5 V458.14 M507.82 455.5 V462.01 M510.36 455.5 V465.88 M512.91 455.5 V469.75 M515.45 455.5 V473.63 M520.55 455.5 V473.54 M523.09 455.5 V469.57 M525.64 455.5 V465.61 M528.18 455.5 V461.65 M530.73 455.5 V457.68 M533.27 455.5 V453.72 M535.82 455.5 V449.75 M538.36 455.5 V445.79 M540.91 455.5 V441.83 M543.45 455.5 V437.86 M548.55 455.5 V437.68 M551.09 455.5 V441.46 M553.64 455.5 V445.25 M556.18 455.5 V449.03 M558.73 455.5 V452.81 M561.27 455.5 V456.59 M563.82 455.5 V460.37 M566.36 455.5 V464.15 M568.91 455.5 V467.94 M571.45 455.5 V471.72 M576.55 455.5 V472.04 M579.09 455.5 V468.57 M581.64 455.5 V465.11 M584.18 455.5 V461.65 M586.73 455.5 V458.18 M589.27 455.5 V454.72 M591.82 455.5 V451.25 M594.36 455.5 V447.79 M596.91 455.5 V444.33 M599.45 455.5 V440.86 M604.55 455.5 V441.49 M607.09 455.5 V445.58 M609.64 455.5 V449.67 M612.18 455.5 V453.76 M614.73 455.5 V457.85 M617.27 455.5 V461.95 M619.82 455.5 V466.04 M622.36 455.5 V470.13 M624.91 455.5 V474.22 M627.45 455.5 V478.31 M632.55 455.5 V477.35 M635.09 455.5 V472.31 M637.64 455.5 V467.26 M640.18 455.5 V462.22 M642.73 455.5 V457.17 M645.27 455.5 V452.13 M647.82 455.5 V447.08 M650.36 455.5 V442.04 M652.91 455.5 V436.99 M655.45 455.5 V431.95 M660.55 455.5 V429.50 M663.09 455.5 V432.10 M665.64 455.5 V434.70 M668.18 455.5 V437.30 M670.73 455.5 V439.90 M673.27 455.5 V442.50 M675.82 455.5 V445.10 M678.36 455.5 V447.70 M680.91 455.5 V450.30 M683.45 455.5 V452.90" stroke="#18d018" stroke-width="1.25" fill="none"/><path d="M154 455.5 V426.40" stroke="#22dd22" stroke-width="1" fill="none"/><path d="M182 455.5 V480.90" stroke="#22dd22" stroke-width="1" fill="none"/><path d="M210 455.5 V436.50" stroke="#22dd22" stroke-width="1" fill="none"/><path d="M238 455.5 V475.00" stroke="#22dd22" stroke-width="1" fill="none"/><path d="M266 455.5 V433.90" stroke="#22dd22" stroke-width="1" fill="none"/><path d="M294 455.5 V477.50" stroke="#22dd22" stroke-width="1" fill="none"/><path d="M322 455.5 V434.90" stroke="#22dd22" stroke-width="1" fill="none"/><path d="M350 455.5 V477.50" stroke="#22dd22" stroke-width="1" fill="none"/><path d="M378 455.5 V434.90" stroke="#22dd22" stroke-width="1" fill="none"/><path d="M406 455.5 V477.20" stroke="#22dd22" stroke-width="1" fill="none"/><path d="M434 455.5 V434.90" stroke="#22dd22" stroke-width="1" fill="none"/><path d="M462 455.5 V476.70" stroke="#22dd22" stroke-width="1" fill="none"/><path d="M490 455.5 V434.90" stroke="#22dd22" stroke-width="1" fill="none"/><path d="M518 455.5 V477.50" stroke="#22dd22" stroke-width="1" fill="none"/><path d="M546 455.5 V433.90" stroke="#22dd22" stroke-width="1" fill="none"/><path d="M574 455.5 V475.50" stroke="#22dd22" stroke-width="1" fill="none"/><path d="M602 455.5 V437.40" stroke="#22dd22" stroke-width="1" fill="none"/><path d="M630 455.5 V482.40" stroke="#22dd22" stroke-width="1" fill="none"/><path d="M658 455.5 V426.90" stroke="#22dd22" stroke-width="1" fill="none"/><path d="M126 455.50 154 426.40 182 480.90 210 436.50 238 475.00 266 433.90 294 477.50 322 434.90 350 477.50 378 434.90 406 477.20 434 434.90 462 476.70 490 434.90 518 477.50 546 433.90 574 475.50 602 437.40 630 482.40 658 426.90 686 455.50" stroke="#19e019" stroke-width="1.2" fill="none" stroke-linejoin="miter"/><path d="M126 455.5 H686" stroke="#000" stroke-width="1.1" fill="none"/><path d="M129.11 534.5 V519.50 M132.22 534.5 V519.50 M135.33 534.5 V519.50 M138.44 534.5 V519.50 M141.56 534.5 V519.50 M144.67 534.5 V519.50 M147.78 534.5 V519.50 M150.89 534.5 V519.50 M157.11 534.5 V563.30 M160.22 534.5 V563.30 M163.33 534.5 V563.30 M166.44 534.5 V563.30 M169.56 534.5 V563.30 M172.67 534.5 V563.30 M175.78 534.5 V563.30 M178.89 534.5 V563.30 M185.11 534.5 V510.50 M188.22 534.5 V510.50 M191.33 534.5 V510.50 M194.44 534.5 V510.50 M197.56 534.5 V510.50 M200.67 534.5 V510.50 M203.78 534.5 V510.50 M206.89 534.5 V510.50 M213.11 534.5 V554.50 M216.22 534.5 V554.50 M219.33 534.5 V554.50 M222.44 534.5 V554.50 M225.56 534.5 V554.50 M228.67 534.5 V554.50 M231.78 534.5 V554.50 M234.89 534.5 V554.50 M241.11 534.5 V512.70 M244.22 534.5 V512.70 M247.33 534.5 V512.70 M250.44 534.5 V512.70 M253.56 534.5 V512.70 M256.67 534.5 V512.70 M259.78 534.5 V512.70 M262.89 534.5 V512.70 M269.11 534.5 V556.20 M272.22 534.5 V556.20 M275.33 534.5 V556.20 M278.44 534.5 V556.20 M281.56 534.5 V556.20 M284.67 534.5 V556.20 M287.78 534.5 V556.20 M290.89 534.5 V556.20 M297.11 534.5 V512.70 M300.22 534.5 V512.70 M303.33 534.5 V512.70 M306.44 534.5 V512.70 M309.56 534.5 V512.70 M312.67 534.5 V512.70 M315.78 534.5 V512.70 M318.89 534.5 V512.70 M325.11 534.5 V556.20 M328.22 534.5 V556.20 M331.33 534.5 V556.20 M334.44 534.5 V556.20 M337.56 534.5 V556.20 M340.67 534.5 V556.20 M343.78 534.5 V556.20 M346.89 534.5 V556.20 M353.11 534.5 V512.70 M356.22 534.5 V512.70 M359.33 534.5 V512.70 M362.44 534.5 V512.70 M365.56 534.5 V512.70 M368.67 534.5 V512.70 M371.78 534.5 V512.70 M374.89 534.5 V512.70 M381.11 534.5 V556.20 M384.22 534.5 V556.20 M387.33 534.5 V556.20 M390.44 534.5 V556.20 M393.56 534.5 V556.20 M396.67 534.5 V556.20 M399.78 534.5 V556.20 M402.89 534.5 V556.20 M409.11 534.5 V512.70 M412.22 534.5 V512.70 M415.33 534.5 V512.70 M418.44 534.5 V512.70 M421.56 534.5 V512.70 M424.67 534.5 V512.70 M427.78 534.5 V512.70 M430.89 534.5 V512.70 M437.11 534.5 V556.20 M440.22 534.5 V556.20 M443.33 534.5 V556.20 M446.44 534.5 V556.20 M449.56 534.5 V556.20 M452.67 534.5 V556.20 M455.78 534.5 V556.20 M458.89 534.5 V556.20 M465.11 534.5 V512.70 M468.22 534.5 V512.70 M471.33 534.5 V512.70 M474.44 534.5 V512.70 M477.56 534.5 V512.70 M480.67 534.5 V512.70 M483.78 534.5 V512.70 M486.89 534.5 V512.70 M493.11 534.5 V556.20 M496.22 534.5 V556.20 M499.33 534.5 V556.20 M502.44 534.5 V556.20 M505.56 534.5 V556.20 M508.67 534.5 V556.20 M511.78 534.5 V556.20 M514.89 534.5 V556.20 M521.11 534.5 V512.00 M524.22 534.5 V512.00 M527.33 534.5 V512.00 M530.44 534.5 V512.00 M533.56 534.5 V512.00 M536.67 534.5 V512.00 M539.78 534.5 V512.00 M542.89 534.5 V512.00 M549.11 534.5 V555.50 M552.22 534.5 V555.50 M555.33 534.5 V555.50 M558.44 534.5 V555.50 M561.56 534.5 V555.50 M564.67 534.5 V555.50 M567.78 534.5 V555.50 M570.89 534.5 V555.50 M577.11 534.5 V514.50 M580.22 534.5 V514.50 M583.33 534.5 V514.50 M586.44 534.5 V514.50 M589.56 534.5 V514.50 M592.67 534.5 V514.50 M595.78 534.5 V514.50 M598.89 534.5 V514.50 M605.11 534.5 V558.20 M608.22 534.5 V558.20 M611.33 534.5 V558.20 M614.44 534.5 V558.20 M617.56 534.5 V558.20 M620.67 534.5 V558.20 M623.78 534.5 V558.20 M626.89 534.5 V558.20 M633.11 534.5 V505.70 M636.22 534.5 V505.70 M639.33 534.5 V505.70 M642.44 534.5 V505.70 M645.56 534.5 V505.70 M648.67 534.5 V505.70 M651.78 534.5 V505.70 M654.89 534.5 V505.70 M661.11 534.5 V549.20 M664.22 534.5 V549.20 M667.33 534.5 V549.20 M670.44 534.5 V549.20 M673.56 534.5 V549.20 M676.67 534.5 V549.20 M679.78 534.5 V549.20 M682.89 534.5 V549.20" stroke="#2828d8" stroke-width="1.25" fill="none"/><path d="M126 534.5 V519.50 H154 V534.5 M154 534.5 V563.30 H182 V534.5 M182 534.5 V510.50 H210 V534.5 M210 534.5 V554.50 H238 V534.5 M238 534.5 V512.70 H266 V534.5 M266 534.5 V556.20 H294 V534.5 M294 534.5 V512.70 H322 V534.5 M322 534.5 V556.20 H350 V534.5 M350 534.5 V512.70 H378 V534.5 M378 534.5 V556.20 H406 V534.5 M406 534.5 V512.70 H434 V534.5 M434 534.5 V556.20 H462 V534.5 M462 534.5 V512.70 H490 V534.5 M490 534.5 V556.20 H518 V534.5 M518 534.5 V512.00 H546 V534.5 M546 534.5 V555.50 H574 V534.5 M574 534.5 V514.50 H602 V534.5 M602 534.5 V558.20 H630 V534.5 M630 534.5 V505.70 H658 V534.5 M658 534.5 V549.20 H686 V534.5" stroke="#10108a" stroke-width="1.2" fill="none"/><path d="M126 534.5 H686" stroke="#101060" stroke-width="1.1" fill="none"/><path d="M182.5 248 V570" stroke="#000" stroke-width="1" stroke-dasharray="3 1" fill="none"/></svg>
</body></html>
